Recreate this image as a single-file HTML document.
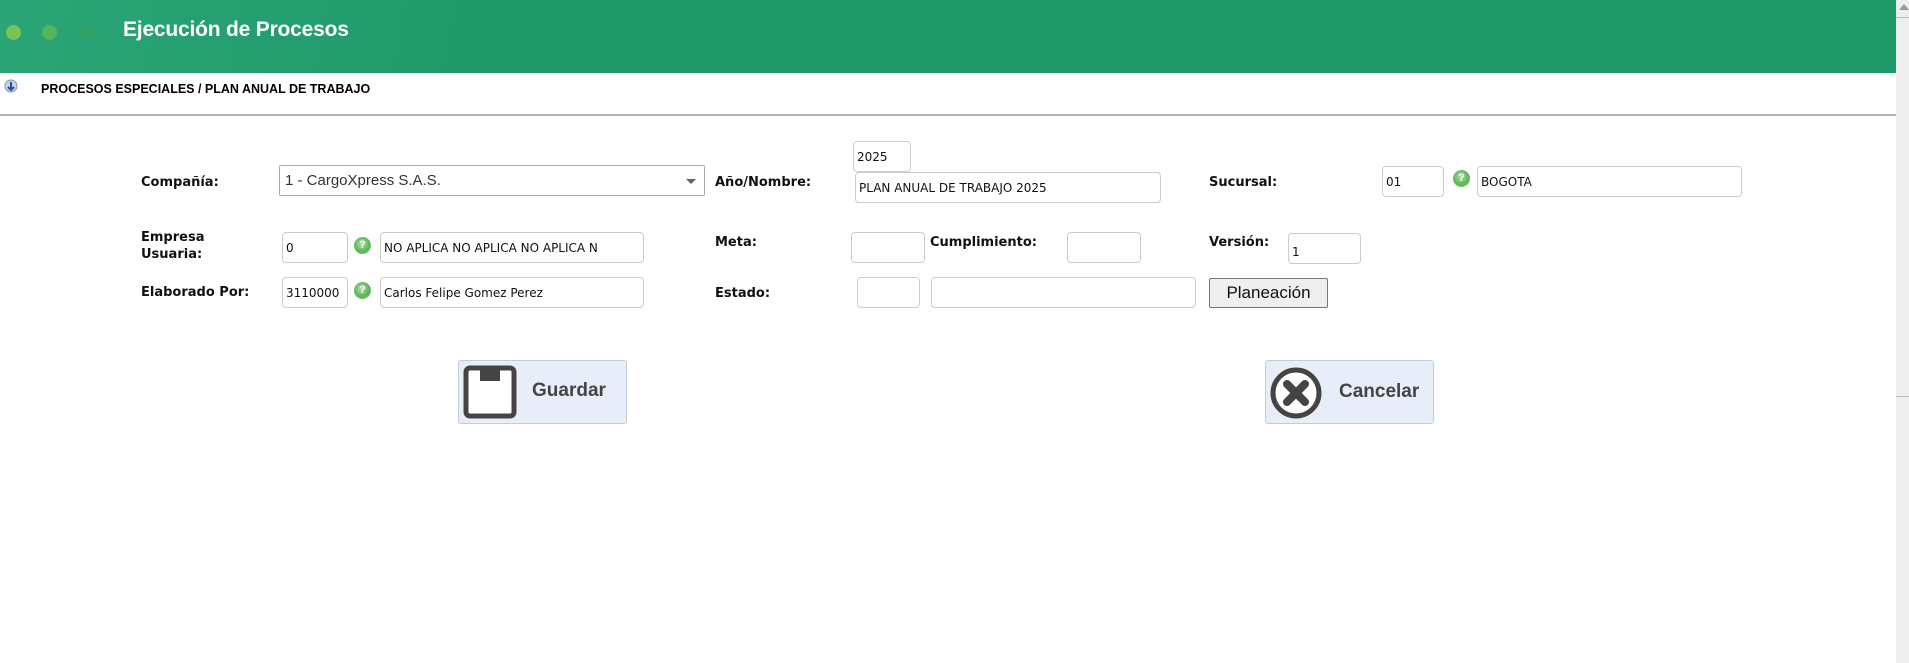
<!DOCTYPE html>
<html><head><meta charset="utf-8"><style>
*{margin:0;padding:0;box-sizing:border-box}
body{width:1909px;height:663px;background:#fff;position:relative;overflow:hidden;font-family:"DejaVu Sans","Liberation Sans",sans-serif}
.a{position:absolute}
.hdr{left:0;top:0;width:1896px;height:73px;background:linear-gradient(100deg,#2ba576 0%,#1f9a6a 25%,#1f9a6a 100%)}
.dot{width:15px;height:15px;border-radius:50%;top:25px}
.title{left:123px;top:18px;color:#fff;font:bold 21px "Liberation Sans",sans-serif;letter-spacing:-.2px}
.bc{left:41px;top:82px;font:bold 12.5px "Liberation Sans",sans-serif;color:#000}
.lbl{font-weight:bold;font-size:13px;color:#111;line-height:17px}
.in{border:1px solid #ccc;border-radius:4px;background:#fff;font-size:12px;color:#111;padding-left:3px;display:flex;align-items:center;overflow:hidden;white-space:nowrap}
.help{width:17px;height:17px;border-radius:50%;background:radial-gradient(circle at 45% 40%,#b5e0a8,#5cb55a 55%,#8cc98a);color:#fff;font:bold 11px "Liberation Sans",sans-serif;text-align:center;line-height:17px}
.btn{background:#e7edf9;border:1px solid #c5cad3;border-radius:3px;font:bold 19px "Liberation Sans",sans-serif;color:#444}
</style></head><body>
<div class="a hdr"></div>
<div class="a dot" style="left:6px;background:#79c352"></div>
<div class="a dot" style="left:42px;background:#56b45a"></div>
<div class="a dot" style="left:79px;background:#2fa364"></div>
<div class="a title">Ejecución de Procesos</div>
<div class="a" style="left:1896px;top:0;width:13px;height:663px;background:#eee"></div>
<div class="a" style="left:1896px;top:17px;width:13px;height:1px;background:#bbb"></div>
<div class="a" style="left:1896px;top:396px;width:13px;height:1px;background:#bbb"></div>
<div class="a" style="left:1899px;top:4px;width:0;height:0;border-left:5px solid transparent;border-right:5px solid transparent;border-bottom:6px solid #999"></div>
<svg class="a" style="left:3px;top:79px" width="16" height="16" viewBox="0 0 16 16"><circle cx="8" cy="7" r="6" fill="#c6d3e8" stroke="#7f93b8"/><path d="M8 3v7M5 8l3 3 3-3" stroke="#2b4f90" stroke-width="2" fill="none"/></svg>
<div class="a bc">PROCESOS ESPECIALES / PLAN ANUAL DE TRABAJO</div>
<div class="a" style="left:0;top:114px;width:1896px;height:2px;background:#b5b5b5"></div>

<div class="a lbl" style="left:141px;top:174px">Compañía:</div>
<div class="a in" style="left:279px;top:165px;width:426px;height:31px;border-color:#aaa;border-radius:2px;font:15px 'Liberation Sans',sans-serif;padding-left:5px;color:#333">1 - CargoXpress S.A.S.</div>
<div class="a" style="left:686px;top:179px;border-left:5px solid transparent;border-right:5px solid transparent;border-top:5px solid #666"></div>

<div class="a in" style="left:853px;top:141px;width:58px;height:31px">2025</div>
<div class="a lbl" style="left:715px;top:174px">Año/Nombre:</div>
<div class="a in" style="left:855px;top:172px;width:306px;height:31px">PLAN ANUAL DE TRABAJO 2025</div>

<div class="a lbl" style="left:1209px;top:174px">Sucursal:</div>
<div class="a in" style="left:1382px;top:166px;width:62px;height:31px">01</div>
<div class="a help" style="left:1453px;top:170px">?</div>
<div class="a in" style="left:1477px;top:166px;width:265px;height:31px">BOGOTA</div>

<div class="a lbl" style="left:141px;top:229px">Empresa<br>Usuaria:</div>
<div class="a in" style="left:282px;top:232px;width:66px;height:31px">0</div>
<div class="a help" style="left:354px;top:237px">?</div>
<div class="a in" style="left:380px;top:232px;width:264px;height:31px">NO APLICA NO APLICA NO APLICA N</div>

<div class="a lbl" style="left:715px;top:234px">Meta:</div>
<div class="a in" style="left:851px;top:232px;width:74px;height:31px"></div>
<div class="a lbl" style="left:930px;top:234px">Cumplimiento:</div>
<div class="a in" style="left:1067px;top:232px;width:74px;height:31px"></div>
<div class="a lbl" style="left:1209px;top:234px">Versión:</div>
<div class="a in" style="left:1288px;top:233px;width:73px;height:31px;padding-top:6px">1</div>

<div class="a lbl" style="left:141px;top:284px">Elaborado Por:</div>
<div class="a in" style="left:282px;top:277px;width:66px;height:31px">3110000</div>
<div class="a help" style="left:354px;top:282px">?</div>
<div class="a in" style="left:380px;top:277px;width:264px;height:31px">Carlos Felipe Gomez Perez</div>

<div class="a lbl" style="left:715px;top:285px">Estado:</div>
<div class="a in" style="left:857px;top:277px;width:63px;height:31px"></div>
<div class="a in" style="left:931px;top:277px;width:265px;height:31px"></div>
<div class="a" style="left:1209px;top:278px;width:119px;height:30px;background:#efefef;border:1px solid #767676;border-radius:2px;font:17px 'Liberation Sans',sans-serif;color:#111;text-align:center;line-height:27px">Planeación</div>

<div class="a btn" style="left:458px;top:360px;width:169px;height:64px"></div>
<svg class="a" style="left:463px;top:365px" width="54" height="54" viewBox="0 0 54 54"><rect x="3" y="3" width="48" height="48" rx="4" fill="#fff" stroke="#444" stroke-width="5"/><rect x="17" y="3" width="20" height="13" fill="#444"/></svg>
<div class="a" style="left:532px;top:380px;font:bold 19px 'Liberation Sans',sans-serif;color:#444">Guardar</div>

<div class="a btn" style="left:1265px;top:360px;width:169px;height:64px"></div>
<svg class="a" style="left:1269px;top:366px" width="54" height="54" viewBox="0 0 54 54"><circle cx="27" cy="27" r="23" fill="#fff" stroke="#444" stroke-width="5"/><path d="M18 18L36 36M36 18L18 36" stroke="#444" stroke-width="8" stroke-linecap="round"/></svg>
<div class="a" style="left:1339px;top:381px;font:bold 19px 'Liberation Sans',sans-serif;color:#444">Cancelar</div>
</body></html>
